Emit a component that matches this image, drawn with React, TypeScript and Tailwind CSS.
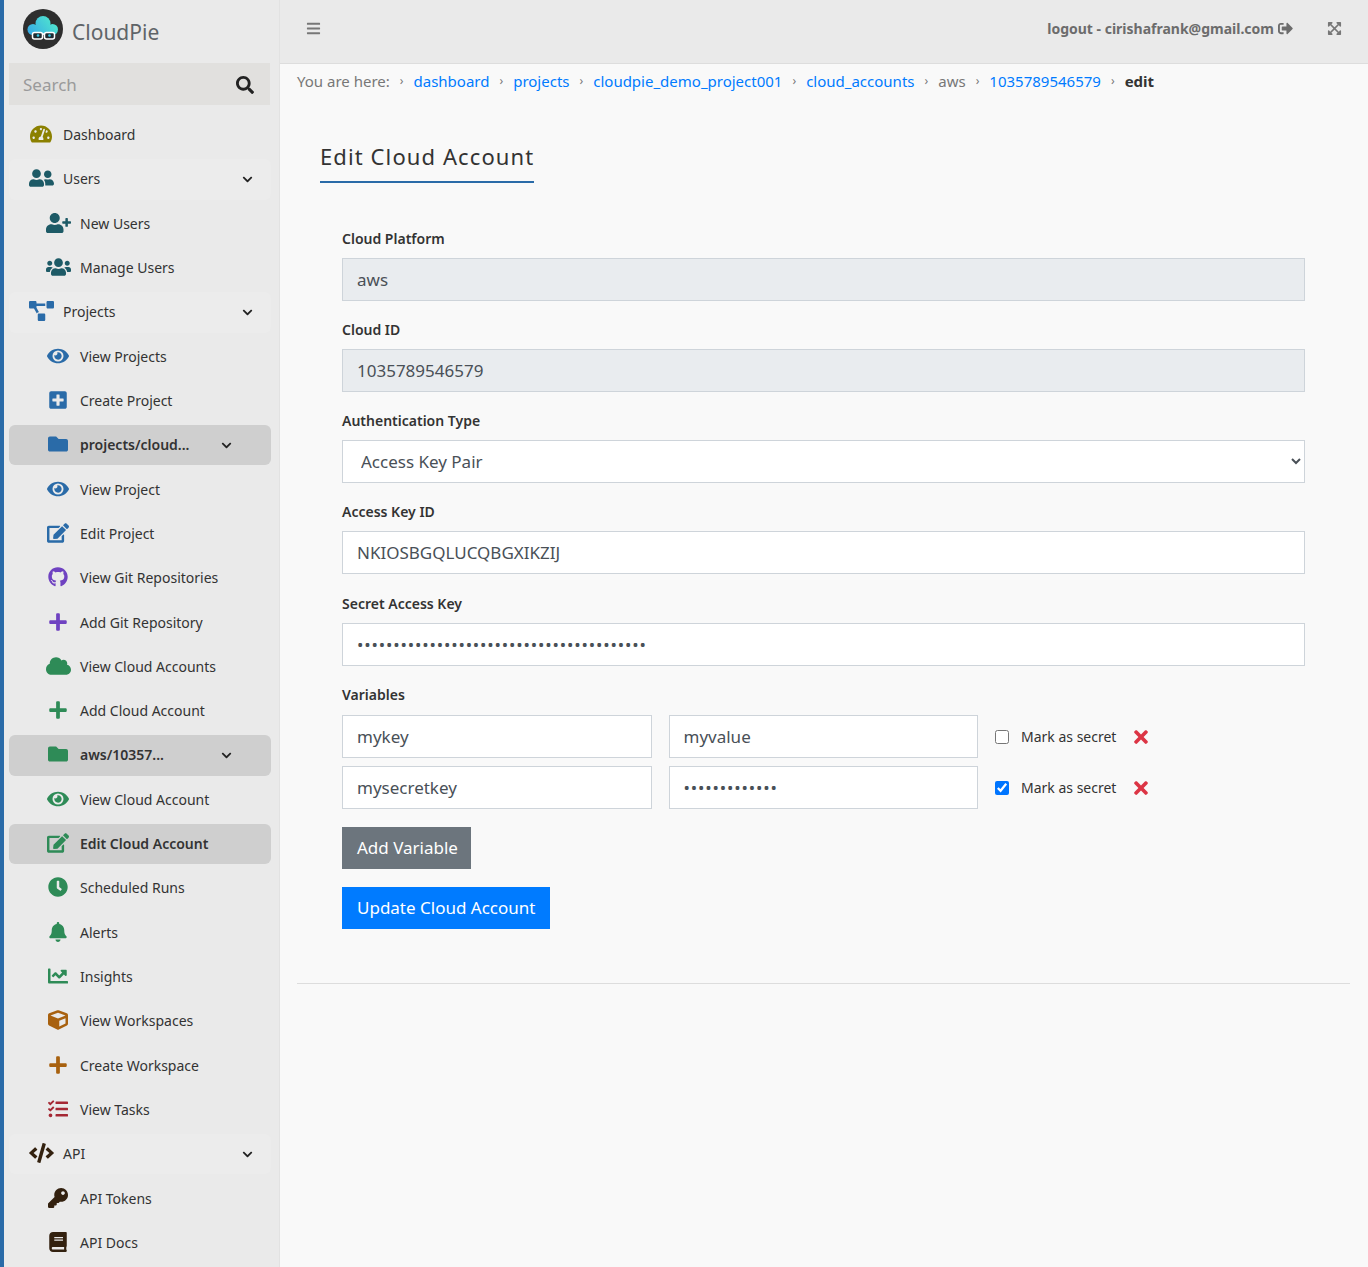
import type { ComponentType, ReactNode } from "react"
import {
  FaBars,
  FaBell,
  FaBook,
  FaChartLine,
  FaChevronDown,
  FaClock,
  FaCloud,
  FaCode,
  FaCube,
  FaEdit,
  FaExpandArrowsAlt,
  FaEye,
  FaFolder,
  FaGithub,
  FaKey,
  FaPlus,
  FaPlusSquare,
  FaProjectDiagram,
  FaSearch,
  FaSignOutAlt,
  FaTachometerAlt,
  FaTasks,
  FaTimes,
  FaUserFriends,
  FaUserPlus,
  FaUsers,
} from "react-icons/fa"

type NavItem = {
  label: string
  icon: ComponentType<{ className?: string }>
  color: string
  kind: "top" | "group" | "sub" | "folder" | "active"
  size?: string
}

const teal = "text-[#1d5a66]"
const blue = "text-[#2a6ba8]"
const purple = "text-[#6f42c1]"
const green = "text-[#2e8b57]"
const brown = "text-[#a8610f]"
const dark = "text-[#33210f]"

// the Font Awesome glyphs are wider than tall, react-icons squeezes them into a square
const wide = "h-5 w-6.25"
const mid = "h-5 w-5.5"

const navItems: NavItem[] = [
  { label: "Dashboard", icon: FaTachometerAlt, color: "text-[#8b8000]", kind: "top", size: mid },
  { label: "Users", icon: FaUserFriends, color: teal, kind: "group", size: wide },
  { label: "New Users", icon: FaUserPlus, color: teal, kind: "sub", size: wide },
  { label: "Manage Users", icon: FaUsers, color: teal, kind: "sub", size: wide },
  { label: "Projects", icon: FaProjectDiagram, color: blue, kind: "group", size: wide },
  { label: "View Projects", icon: FaEye, color: blue, kind: "sub", size: mid },
  { label: "Create Project", icon: FaPlusSquare, color: blue, kind: "sub" },
  { label: "projects/cloud...", icon: FaFolder, color: blue, kind: "folder" },
  { label: "View Project", icon: FaEye, color: blue, kind: "sub", size: mid },
  { label: "Edit Project", icon: FaEdit, color: blue, kind: "sub", size: mid },
  { label: "View Git Repositories", icon: FaGithub, color: purple, kind: "sub" },
  { label: "Add Git Repository", icon: FaPlus, color: purple, kind: "sub" },
  { label: "View Cloud Accounts", icon: FaCloud, color: green, kind: "sub", size: wide },
  { label: "Add Cloud Account", icon: FaPlus, color: green, kind: "sub" },
  { label: "aws/10357...", icon: FaFolder, color: green, kind: "folder" },
  { label: "View Cloud Account", icon: FaEye, color: green, kind: "sub", size: mid },
  { label: "Edit Cloud Account", icon: FaEdit, color: green, kind: "active", size: mid },
  { label: "Scheduled Runs", icon: FaClock, color: green, kind: "sub" },
  { label: "Alerts", icon: FaBell, color: green, kind: "sub" },
  { label: "Insights", icon: FaChartLine, color: green, kind: "sub" },
  { label: "View Workspaces", icon: FaCube, color: brown, kind: "sub" },
  { label: "Create Workspace", icon: FaPlus, color: brown, kind: "sub" },
  { label: "View Tasks", icon: FaTasks, color: "text-[#a52834]", kind: "sub" },
  { label: "API", icon: FaCode, color: dark, kind: "group", size: wide },
  { label: "API Tokens", icon: FaKey, color: dark, kind: "sub" },
  { label: "API Docs", icon: FaBook, color: dark, kind: "sub" },
]

const crumbs = [
  { label: "dashboard", link: true },
  { label: "projects", link: true },
  { label: "cloudpie_demo_project001", link: true },
  { label: "cloud_accounts", link: true },
  { label: "aws", link: false },
  { label: "1035789546579", link: true },
]

const inputClass =
  "h-10.75 w-full border border-[#ced4da] px-3.5 text-[17px] text-[#495057] outline-none"

function Logo() {
  return (
    <svg viewBox="0 0 40 40" className="size-10 shrink-0">
      <defs>
        <linearGradient id="cloud" gradientUnits="userSpaceOnUse" x1="5" y1="26" x2="28" y2="8">
          <stop offset="0" stopColor="#35a8e6" />
          <stop offset="1" stopColor="#4fe3cf" />
        </linearGradient>
      </defs>
      <circle cx="20" cy="20" r="20" fill="#2e2e2e" />
      <g fill="url(#cloud)">
        <circle cx="20" cy="14.5" r="7.5" />
        <circle cx="10" cy="20.5" r="5.5" />
        <circle cx="29.5" cy="20.5" r="5.5" />
        <rect x="10" y="16" width="19" height="10" />
      </g>
      <rect x="9.5" y="23.5" width="10" height="6.5" rx="2" fill="#1d2a30" stroke="#fff" strokeWidth="1.5" />
      <rect x="21.5" y="23.5" width="10" height="6.5" rx="2" fill="#1d2a30" stroke="#fff" strokeWidth="1.5" />
      <path d="M19.5 25h2" stroke="#fff" strokeWidth="1.5" />
      <circle cx="15" cy="26.5" r="1.3" fill="#35c8e6" />
      <circle cx="26.5" cy="26.5" r="1.3" fill="#35c8e6" />
    </svg>
  )
}

function SidebarRow({ item }: { item: NavItem }) {
  const Icon = item.icon
  const boxed = item.kind === "folder" || item.kind === "active"
  const indented = item.kind !== "top" && item.kind !== "group"
  return (
    <div
      className={`my-0.5 flex items-center gap-2.5 rounded-md ${indented ? "pl-9.25" : "pl-5"} ${
        boxed ? "bg-[#cfcfcf]" : ""
      } ${item.kind === "group" ? "bg-[#ececec]" : ""}`}
    >
      <span className="-mt-0.5 flex w-6 justify-center">
        <Icon className={`shrink-0 ${item.size ?? "size-5"} ${item.color}`} />
      </span>
      <span className={`flex-1 text-sm text-[#333] ${boxed ? "font-semibold" : ""}`}>
        {item.label}
      </span>
      {item.kind === "group" && <FaChevronDown className="mr-4.5 text-[11px] text-[#222]" />}
      {item.kind === "folder" && <FaChevronDown className="mr-9.75 text-[11px] text-[#222]" />}
    </div>
  )
}

function Sidebar() {
  return (
    <aside className="flex h-full w-70 shrink-0 flex-col border-r border-l-4 border-r-[#e2e2e2] border-l-[#2a6ba8] bg-[#eaeaea]">
      <div className="flex h-15.75 shrink-0 items-center gap-2.25 pb-1.5 pl-4.75">
        <Logo />
        <span className="mt-2 text-[21px] text-[#5f6468]">CloudPie</span>
      </div>
      <div className="ml-1.25 mr-2.25 flex h-10.5 shrink-0 items-center justify-between bg-[#e1e0de] pl-3.5 pr-4 pt-0.5">
        <span className="text-[17px] text-[#9a9a9a]">Search</span>
        <FaSearch className="text-lg text-[#222]" />
      </div>
      <nav className="ml-1.25 mr-2 grid flex-1 grid-rows-26 pb-0.5 pt-2">
        {navItems.map((item) => (
          <SidebarRow key={item.label} item={item} />
        ))}
      </nav>
    </aside>
  )
}

function Field({
  label,
  className = "mb-4.25",
  children,
}: {
  label: string
  className?: string
  children: ReactNode
}) {
  return (
    <div className={className}>
      <label className="mb-1.75 block text-sm leading-6 font-semibold text-[#333]">{label}</label>
      {children}
    </div>
  )
}

function VariableRow({ name, value, secret }: { name: string; value: string; secret: boolean }) {
  return (
    <div className="flex items-center gap-4.25">
      <input className={`${inputClass} flex-1 bg-white`} defaultValue={name} />
      <input
        className={`${inputClass} flex-1 bg-white ${secret ? "tracking-wider" : ""}`}
        type={secret ? "password" : "text"}
        defaultValue={value}
      />
      <div className="flex w-77.5 items-center">
        <input type="checkbox" defaultChecked={secret} className="size-3.5" />
        <span className="ml-3 text-sm text-[#333]">Mark as secret</span>
        <FaTimes className="ml-3.75 text-xl text-[#dc3545]" />
      </div>
    </div>
  )
}

export default function App() {
  return (
    <div
      className="flex h-screen w-full overflow-hidden bg-[#f9f9f9]"
      style={{ fontFamily: '"Noto Sans", "Open Sans", sans-serif' }}
    >
      <Sidebar />
      <div className="flex min-w-0 flex-1 flex-col">
        <header className="flex h-16 shrink-0 items-center justify-between border-b border-[#dddddd] bg-[#eaeaea] pb-1.5 pl-6.5 pr-6.5">
          <FaBars className="text-[15px] text-[#777]" />
          <div className="flex items-center gap-8.5">
            <div className="flex items-center gap-1 text-sm font-bold text-[#6c6c6c]">
              <span>logout - cirishafrank@gmail.com</span>
              <FaSignOutAlt className="text-[15px]" />
            </div>
            <FaExpandArrowsAlt className="text-[15px] text-[#777]" />
          </div>
        </header>

        <main className="flex-1 pl-4.25 pr-4.5">
          <div className="flex h-8.5 items-center text-[15px] text-[#777]">
            <span>You are here:</span>
            {crumbs.map((crumb) => (
              <span key={crumb.label} className="flex items-center">
                <span className="mx-2.5 text-xs">›</span>
                <span className={crumb.link ? "text-[#007bff]" : ""}>{crumb.label}</span>
              </span>
            ))}
            <span className="mx-2.5 text-xs">›</span>
            <span className="font-bold text-[#333]">edit</span>
          </div>

          <div className="mt-10.5 ml-5.75">
            <h1 className="inline-block border-b-2 border-[#2a6ba8] pb-2 text-[22px] tracking-wider text-[#333]">
              Edit Cloud Account
            </h1>
          </div>

          <form className="mt-11 pl-11.25 pr-11.25">
            <Field label="Cloud Platform">
              <input className={`${inputClass} bg-[#e9ecef]`} defaultValue="aws" disabled />
            </Field>
            <Field label="Cloud ID">
              <input className={`${inputClass} bg-[#e9ecef]`} defaultValue="1035789546579" disabled />
            </Field>
            <Field label="Authentication Type">
              <select className={`${inputClass} bg-white`} defaultValue="Access Key Pair">
                <option>Access Key Pair</option>
              </select>
            </Field>
            <Field label="Access Key ID" className="mb-4.5">
              <input className={`${inputClass} bg-white`} defaultValue="NKIOSBGQLUCQBGXIKZIJ" />
            </Field>
            <Field label="Secret Access Key">
              <input
                className={`${inputClass} bg-white tracking-wider`}
                type="password"
                defaultValue="aaaaaaaaaaaaaaaaaaaaaaaaaaaaaaaaaaaaaaaa"
              />
            </Field>
            <Field label="Variables" className="mb-4.5">
              <div className="flex flex-col gap-2 pt-px">
                <VariableRow name="mykey" value="myvalue" secret={false} />
                <VariableRow name="mysecretkey" value="aaaaaaaaaaaaa" secret />
              </div>
            </Field>
            <button
              type="button"
              className="block h-10.5 bg-[#6c757d] pl-3.75 pr-3.25 text-[17px] text-white"
            >
              Add Variable
            </button>
            <button
              type="button"
              className="mt-4.5 block h-10.5 bg-[#007bff] px-3.75 text-[17px] text-white"
            >
              Update Cloud Account
            </button>
          </form>

          <hr className="mt-13.5 border-[#dddddd]" />
        </main>
      </div>
    </div>
  )
}
